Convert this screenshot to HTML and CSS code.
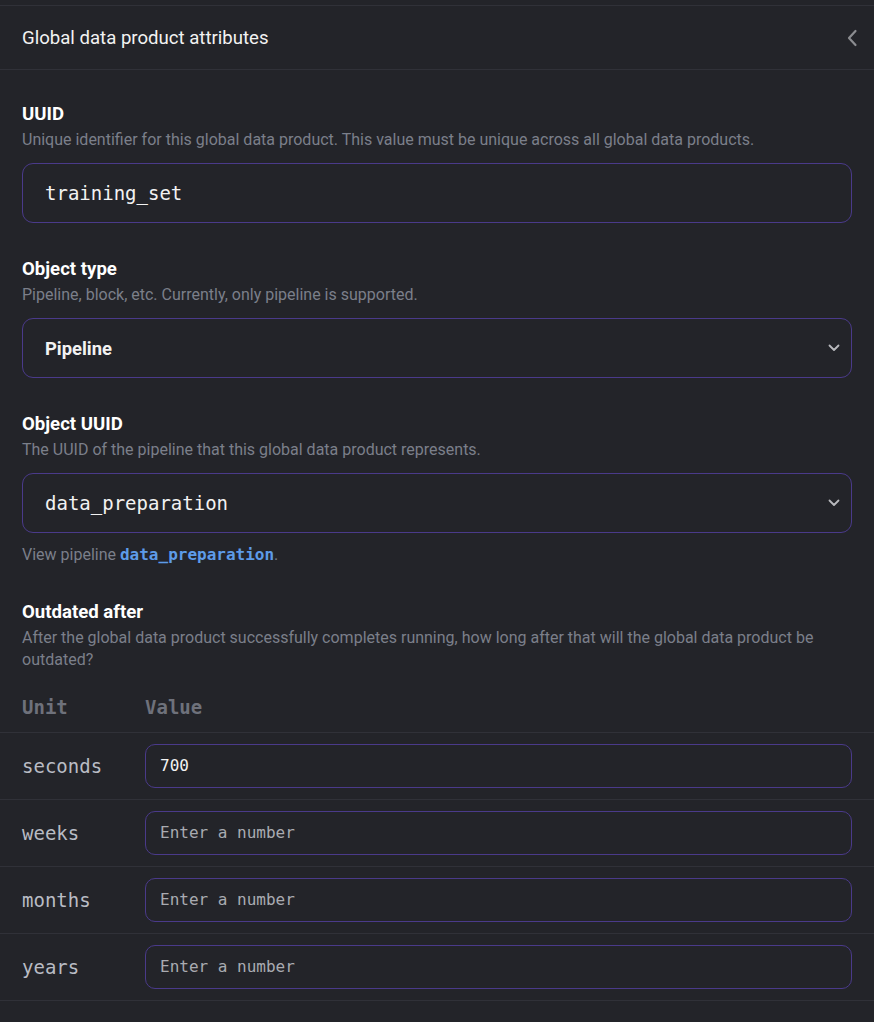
FILE: index.html
```html
<!DOCTYPE html>
<html>
<head>
<meta charset="utf-8">
<link rel="stylesheet" href="styles.css">
</head>
<body>
<div class="panel">
  <div class="panel-header">
    <span class="panel-title">Global data product attributes</span>
    <svg class="collapse-icon" width="12" height="18" viewBox="0 0 12 18"><path d="M9.5 2 L3 9 L9.5 16" fill="none" stroke="currentColor" stroke-width="2.2" stroke-linecap="round" stroke-linejoin="round"/></svg>
  </div>
  <div class="panel-body">
    <div class="field">
      <div class="field-label">UUID</div>
      <div class="field-desc">Unique identifier for this global data product. This value must be unique across all global data products.</div>
      <div class="text-input mono">training_set</div>
    </div>
    <div class="field">
      <div class="field-label">Object type</div>
      <div class="field-desc">Pipeline, block, etc. Currently, only pipeline is supported.</div>
      <div class="text-input select">
        <span class="select-value">Pipeline</span>
        <svg class="caret" width="12" height="8" viewBox="0 0 12 8"><path d="M1.5 1.5 L6 6 L10.5 1.5" fill="none" stroke="currentColor" stroke-width="1.8" stroke-linecap="round" stroke-linejoin="round"/></svg>
      </div>
    </div>
    <div class="field">
      <div class="field-label">Object UUID</div>
      <div class="field-desc">The UUID of the pipeline that this global data product represents.</div>
      <div class="text-input select">
        <span class="mono">data_preparation</span>
        <svg class="caret" width="12" height="8" viewBox="0 0 12 8"><path d="M1.5 1.5 L6 6 L10.5 1.5" fill="none" stroke="currentColor" stroke-width="1.8" stroke-linecap="round" stroke-linejoin="round"/></svg>
      </div>
      <div class="field-note">View pipeline <a class="link mono" href="#">data_preparation</a>.</div>
    </div>
    <div class="field last">
      <div class="field-label">Outdated after</div>
      <div class="field-desc">After the global data product successfully completes running, how long after that will the global data product be outdated?</div>
    </div>
  </div>
  <table class="unit-table">
    <thead>
      <tr><th class="col-unit">Unit</th><th>Value</th></tr>
    </thead>
    <tbody>
      <tr><td class="col-unit">seconds</td><td><div class="num-input filled">700</div></td></tr>
      <tr><td class="col-unit">weeks</td><td><div class="num-input">Enter a number</div></td></tr>
      <tr><td class="col-unit">months</td><td><div class="num-input">Enter a number</div></td></tr>
      <tr><td class="col-unit">years</td><td><div class="num-input">Enter a number</div></td></tr>
    </tbody>
  </table>
</div>
</body>
</html>
```

FILE: styles.css
```css
* { box-sizing: border-box; }
html, body { margin: 0; padding: 0; }
body {
  background: #232429;
  font-family: Roboto, "Liberation Sans", sans-serif;
  color: #ffffff;
  padding-top: 5px;
}
.mono { font-family: "DejaVu Sans Mono", "Liberation Mono", monospace; }
.panel-header {
  height: 65px;
  border-top: 1px solid #303138;
  border-bottom: 1px solid #303138;
  display: flex;
  align-items: center;
  justify-content: space-between;
  padding: 0 16px 0 22px;
}
.panel-title { font-size: 18.6px; color: #f2f2f2; }
.collapse-icon { color: #8b8c90; }
.panel-body { padding: 31px 22px 0; }
.field { margin-bottom: 33px; }
.field.last { margin-bottom: 0; }
.field-label { font-size: 18.6px; font-weight: 700; line-height: 26px; }
.field-desc { margin-top: 2px; font-size: 16px; line-height: 22px; color: #7b7f8a; }
.text-input {
  margin-top: 12px;
  height: 60px;
  border: 1px solid #4a3a8a;
  border-radius: 11px;
  display: flex;
  align-items: center;
  padding: 0 11px 0 22px;
  font-size: 19px;
  color: #f2f2f2;
}
.select { justify-content: space-between; }
.select-value { font-size: 18.4px; font-weight: 700; font-family: Roboto, sans-serif; }
.caret { color: #b8b9bd; }
.field-note { margin-top: 11px; font-size: 16px; line-height: 22px; color: #7b7f8a; }
.link { color: #5d9be8; font-weight: 700; text-decoration: none; font-size: 16px; }
.unit-table {
  width: 100%;
  border-collapse: collapse;
  margin-top: 12px;
}
.unit-table th {
  text-align: left;
  font-family: "DejaVu Sans Mono", monospace;
  font-size: 19px;
  font-weight: 700;
  color: #6e717b;
  height: 49px;
  padding: 0 22px 0 0;
  vertical-align: middle;
}
.unit-table td {
  border-top: 1px solid #303138;
  border-bottom: 1px solid #303138;
  padding: 11px 22px 11px 0;
  font-family: "DejaVu Sans Mono", monospace;
  font-size: 19px;
  color: #b9bcc4;
}
.unit-table .col-unit { padding-left: 22px; width: 145px; }
.num-input {
  height: 44px;
  border: 1px solid #4a3a8a;
  border-radius: 10px;
  display: flex;
  align-items: center;
  padding: 0 14px;
  font-size: 16px;
  color: #a9abb1;
}
.num-input.filled { color: #f2f2f2; }
```
